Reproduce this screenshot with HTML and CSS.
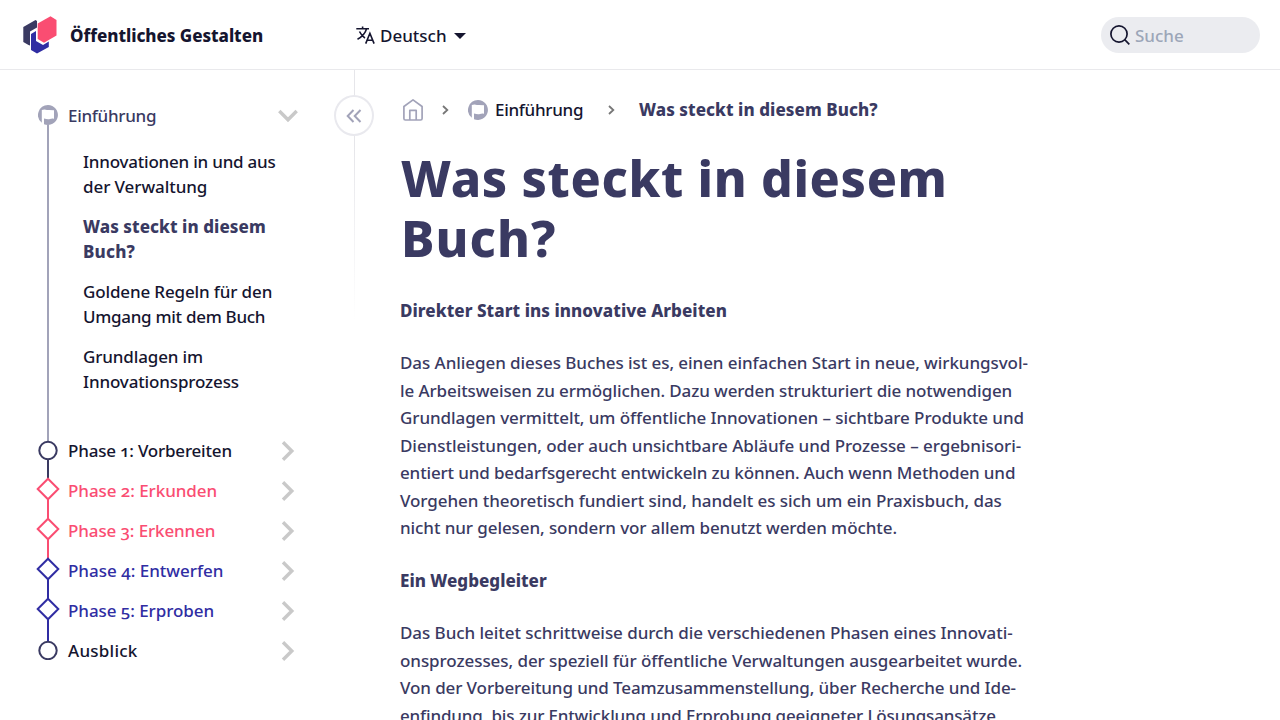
FILE: index.html
```html
<!DOCTYPE html>
<html lang="de">
<head>
<meta charset="utf-8">
<title>Was steckt in diesem Buch? – Öffentliches Gestalten</title>
<link rel="stylesheet" href="styles.css">
</head>
<body>
<svg class="defs" width="0" height="0">
  <symbol id="flag" viewBox="0 0 20 20"><path fill="#a2a3b9" d="M10 0A10 10 0 0 0 3.800 17.800V4.900Q6.500 4.300 9 4.900H11L16 5.200V13.700Q14 13.200 12 14T6 13.600V19.200A10 10 0 1 0 10 0Z"/></symbol>
  <symbol id="chev" viewBox="0 0 14 20"><path fill="none" stroke="#c9c9c9" stroke-width="3.400" d="M2 1.300 10.800 10 2 18.700"/></symbol>
</svg>
<header class="header">
  <a class="brand">
    <svg class="logo" width="34" height="38" viewBox="0 0 34 38"><path fill="#3a3a62" d="M.3 11 12.500 4 14 5v6.500L7 15.500V29.500L5.500 29 .3 26Z"/><path fill="#302da3" d="M8 18 13 15V25L20 29 25.800 25.500V31L14 37.500 8 34Z"/><path fill="#fa4d72" d="M14.700 7.500 27.500.3 33.500 4V19.500L21 26.800 14.700 23Z"/></svg>
    <span class="brand-name">Öffentliches Gestalten</span>
  </a>
  <div class="lang">
    <svg width="19" height="19" viewBox="0 0 19 19" fill="none" stroke="#15152f" stroke-width="1.600"><path d="M.3 2.800H13M6.600.5V2.800M10.500 3Q8.500 9.500 1.500 13.200M3.500 5.500Q5.500 9.800 9 12M9.700 17.600 13.900 7.300 18.100 17.600M11 14.300H16.800"/></svg>
    <span class="lang-name">Deutsch</span>
    <span class="caret"></span>
  </div>
  <div class="search">
    <svg width="20" height="20" viewBox="0 0 20 20" fill="none" stroke="#15152f" stroke-width="1.700"><circle cx="9" cy="9" r="8.100"/><path d="M14.700 14.700 19.300 19.300"/></svg>
    <span class="search-label">Suche</span>
  </div>
</header>
<div class="page">
  <nav class="sidebar">
    <div class="row intro">
      <svg class="marker" width="20" height="20"><use href="#flag"/></svg>
      <span class="label l0">Einführung</span>
      <svg class="arrow down" width="14" height="20"><use href="#chev"/></svg>
    </div>
    <ul class="sub">
      <li><span class="s1">Innovationen in und aus</span><br><span class="s2">der Verwaltung</span></li>
      <li class="active"><span class="s3">Was steckt in diesem</span><br><span class="s4">Buch?</span></li>
      <li><span class="s5">Goldene Regeln für den</span><br><span class="s6">Umgang mit dem Buch</span></li>
      <li><span class="s7">Grundlagen im</span><br><span class="s8">Innovationsprozess</span></li>
    </ul>
    <div class="row dark">
      <svg class="marker" width="20" height="20"><circle cx="10" cy="10.500" r="8.700"/></svg>
      <span class="label l1">Phase 1: Vorbereiten</span>
      <svg class="arrow" width="14" height="20"><use href="#chev"/></svg>
    </div>
    <div class="row red">
      <svg class="marker" width="24" height="24"><path d="M12 1.700 22.300 12 12 22.300 1.700 12Z"/></svg>
      <span class="label l2">Phase 2: Erkunden</span>
      <svg class="arrow" width="14" height="20"><use href="#chev"/></svg>
    </div>
    <div class="row red">
      <svg class="marker" width="24" height="24"><path d="M12 1.700 22.300 12 12 22.300 1.700 12Z"/></svg>
      <span class="label l3">Phase 3: Erkennen</span>
      <svg class="arrow" width="14" height="20"><use href="#chev"/></svg>
    </div>
    <div class="row blue">
      <svg class="marker" width="24" height="24"><path d="M12 1.700 22.300 12 12 22.300 1.700 12Z"/></svg>
      <span class="label l4">Phase 4: Entwerfen</span>
      <svg class="arrow" width="14" height="20"><use href="#chev"/></svg>
    </div>
    <div class="row blue">
      <svg class="marker" width="24" height="24"><path d="M12 1.700 22.300 12 12 22.300 1.700 12Z"/></svg>
      <span class="label l5">Phase 5: Erproben</span>
      <svg class="arrow" width="14" height="20"><use href="#chev"/></svg>
    </div>
    <div class="row dark last">
      <svg class="marker" width="20" height="20"><circle cx="10" cy="10.500" r="8.700"/></svg>
      <span class="label l6">Ausblick</span>
      <svg class="arrow" width="14" height="20"><use href="#chev"/></svg>
    </div>
    <div class="divider"></div>
    <button class="collapse"><svg width="16" height="14" viewBox="0 0 16 14" fill="none" stroke="#a2a3b9" stroke-width="2"><path d="M7.500 1 1.700 7 7.500 13M14.500 1 8.700 7 14.500 13"/></svg></button>
  </nav>
  <main class="main">
    <div class="crumbs">
      <svg class="home" width="20" height="22" viewBox="0 0 20 22" fill="none" stroke="#a2a3b9" stroke-width="1.700" stroke-linejoin="round"><path d="M.9 7.500 10 .9 19.100 7.500V19.500Q19.100 21 17.600 21H2.400Q.9 21 .9 19.500ZM6.800 21V11.300H13.200V21"/></svg>
      <svg class="sep sep1" width="7" height="10" viewBox="0 0 7 10"><path d="M1 1 5.300 5 1 9"/></svg>
      <svg class="crumb-flag" width="20" height="20"><use href="#flag"/></svg>
      <span class="c1">Einführung</span>
      <svg class="sep sep2" width="7" height="10" viewBox="0 0 7 10"><path d="M1 1 5.300 5 1 9"/></svg>
      <span class="c2">Was steckt in diesem Buch?</span>
    </div>
    <h1><span class="h1a">Was steckt in diesem</span><br><span class="h1b">Buch?</span></h1>
    <h2 class="h2a">Direkter Start ins innovative Arbeiten</h2>
    <p><span class="p1">Das Anliegen dieses Buches ist es, einen einfachen Start in neue, wirkungsvol-</span><br><span class="p2">le Arbeitsweisen zu ermöglichen. Dazu werden strukturiert die notwendigen</span><br><span class="p3">Grundlagen vermittelt, um öffentliche Innovationen – sichtbare Produkte und</span><br><span class="p4">Dienstleistungen, oder auch unsichtbare Abläufe und Prozesse – ergebnisori-</span><br><span class="p5">entiert und bedarfsgerecht entwickeln zu können. Auch wenn Methoden und</span><br><span class="p6">Vorgehen theoretisch fundiert sind, handelt es sich um ein Praxisbuch, das</span><br><span class="p7">nicht nur gelesen, sondern vor allem benutzt werden möchte.</span></p>
    <h2 class="h2b">Ein Wegbegleiter</h2>
    <p><span class="p8">Das Buch leitet schrittweise durch die verschiedenen Phasen eines Innovati-</span><br><span class="p9">onsprozesses, der speziell für öffentliche Verwaltungen ausgearbeitet wurde.</span><br><span class="p10">Von der Vorbereitung und Teamzusammenstellung, über Recherche und Ide-</span><br><span class="p11">enfindung, bis zur Entwicklung und Erprobung geeigneter Lösungsansätze</span></p>
  </main>
</div>
</body>
</html>
```

FILE: styles.css
```css
* { box-sizing: border-box; }
body { margin: 0; height: 720px; overflow: hidden; background: #fff; color: #15152f; font-family: "Noto Sans", sans-serif; font-size: 17px; font-variant-numeric: oldstyle-nums; white-space: nowrap; }
.defs { position: absolute; }
svg { display: block; flex: none; }
.header { height: 70px; border-bottom: 1px solid #e9e9ec; display: flex; align-items: center; padding: 0 20px 0 23px; }
.brand { display: flex; align-items: center; gap: 13px; width: 333px; font-weight: 800; }
.brand-name { letter-spacing: -.04px; padding-top: 2px; }
.lang { display: flex; align-items: center; gap: 5px; font-weight: 500; }
.lang svg { margin-top: 1px; }
.lang-name { width: 66px; padding-top: 2px; }
.caret { border: 6px solid transparent; border-top-color: #15152f; border-bottom: 0; margin: 2px 0 0 3px; }
.search { margin-left: auto; width: 159px; height: 36px; border-radius: 18px; background: #ebecf0; display: flex; align-items: center; gap: 5px; padding-left: 9px; color: #9ca6b8; font-weight: 500; }
.search-label { padding-top: 2px; }
.page { display: flex; height: 650px; }
.sidebar { position: relative; width: 355px; flex: none; padding-top: 26px; line-height: 25px; font-weight: 500; }
.row { position: relative; height: 40px; display: grid; grid-template-columns: 28px 1fr 20px; column-gap: 3px; align-items: center; padding: 0 57px 0 34px; font-size: 17px; }
.row::before { content: ""; position: absolute; left: 47px; top: 20px; width: 2px; height: 40px; background: currentColor; }
.row .marker { position: relative; justify-self: center; fill: #fff; stroke: currentColor; stroke-width: 2; }
.row.intro .marker { stroke: none; top: -1px; }
.red .marker, .blue .marker { top: -2px; }
.dark .marker { top: -1px; }
.label { margin: 0 0 2px 3px; }
.arrow { justify-self: center; margin-bottom: 1px; }
.down { transform: rotate(90deg); }
.intro { color: #3a3a62; }
.row.intro::before { top: 29px; height: 327px; background: #a2a3b9; }
.dark { color: #3a3a62; }
.dark .label { color: #15152f; }
.red { color: #fa4d72; }
.blue { color: #302da3; }
.last::before { display: none; }
.sub { list-style: none; margin: 0; padding: 13px 0 36px 83px; height: 295px; }
.sub li { margin-bottom: 15px; }
.active { font-weight: 800; color: #3a3a62; }
.divider { position: absolute; right: 0; top: 0; width: 1px; height: 250px; background: linear-gradient(#e6e6ea 30%, rgba(230,230,234,0)); }
.collapse { position: absolute; left: 334px; top: 25px; width: 40px; height: 41px; border: 2px solid #e9e9ee; border-radius: 50%; background: #fff; display: flex; align-items: center; justify-content: center; padding: 0; }
.main { padding: 25px 0 0 45px; color: #3a3a62; font-size: 17px; line-height: 27.5px; font-weight: 500; }
.crumbs { display: flex; align-items: center; height: 30px; padding-left: 3px; }
.sep { fill: none; stroke: #777; stroke-width: 1.800; }
.sep1 { margin: 0 19px; }
.c1 { color: #15152f; margin-left: 7px; width: 88px; }
.sep2 { margin: 0 24px 0 25px; }
.c2 { font-weight: 800; }
h1 { margin: 23px 0 0 1px; font-size: 50px; line-height: 60px; font-weight: 800; }
h2 { margin: 28.5px 0 25px; font-size: 17px; line-height: 27.5px; font-weight: 800; }
p { margin: 0; }
p + h2 { margin-top: 25px; }

/* per-line tracking */
.l0, .c1 { letter-spacing: -.3px; }
.l1 { letter-spacing: -.2px; }
.l2, .l5 { letter-spacing: -.06px; }
.l3 { letter-spacing: -.12px; }
.l6 { letter-spacing: .25px; }
.s1 { letter-spacing: -.22px; }
.s2 { letter-spacing: -.08px; }
.s3 { letter-spacing: .06px; }
.s4 { letter-spacing: .2px; }
.s5, .s7, .s8 { letter-spacing: -.14px; }
.s6 { letter-spacing: -.29px; }
.c2, .h2a { letter-spacing: .06px; }
.h1a { letter-spacing: .63px; }
.h1b { letter-spacing: 1.100px; }
.p1, .p6 { letter-spacing: -.065px; }
.p2 { letter-spacing: -.105px; }
.p3, .p7 { letter-spacing: -.082px; }
.p4, .p8 { letter-spacing: -.055px; }
.p5 { letter-spacing: -.145px; }
.p9 { letter-spacing: -.07px; }
.p10 { letter-spacing: -.11px; }
.p11 { letter-spacing: -.155px; }
```
